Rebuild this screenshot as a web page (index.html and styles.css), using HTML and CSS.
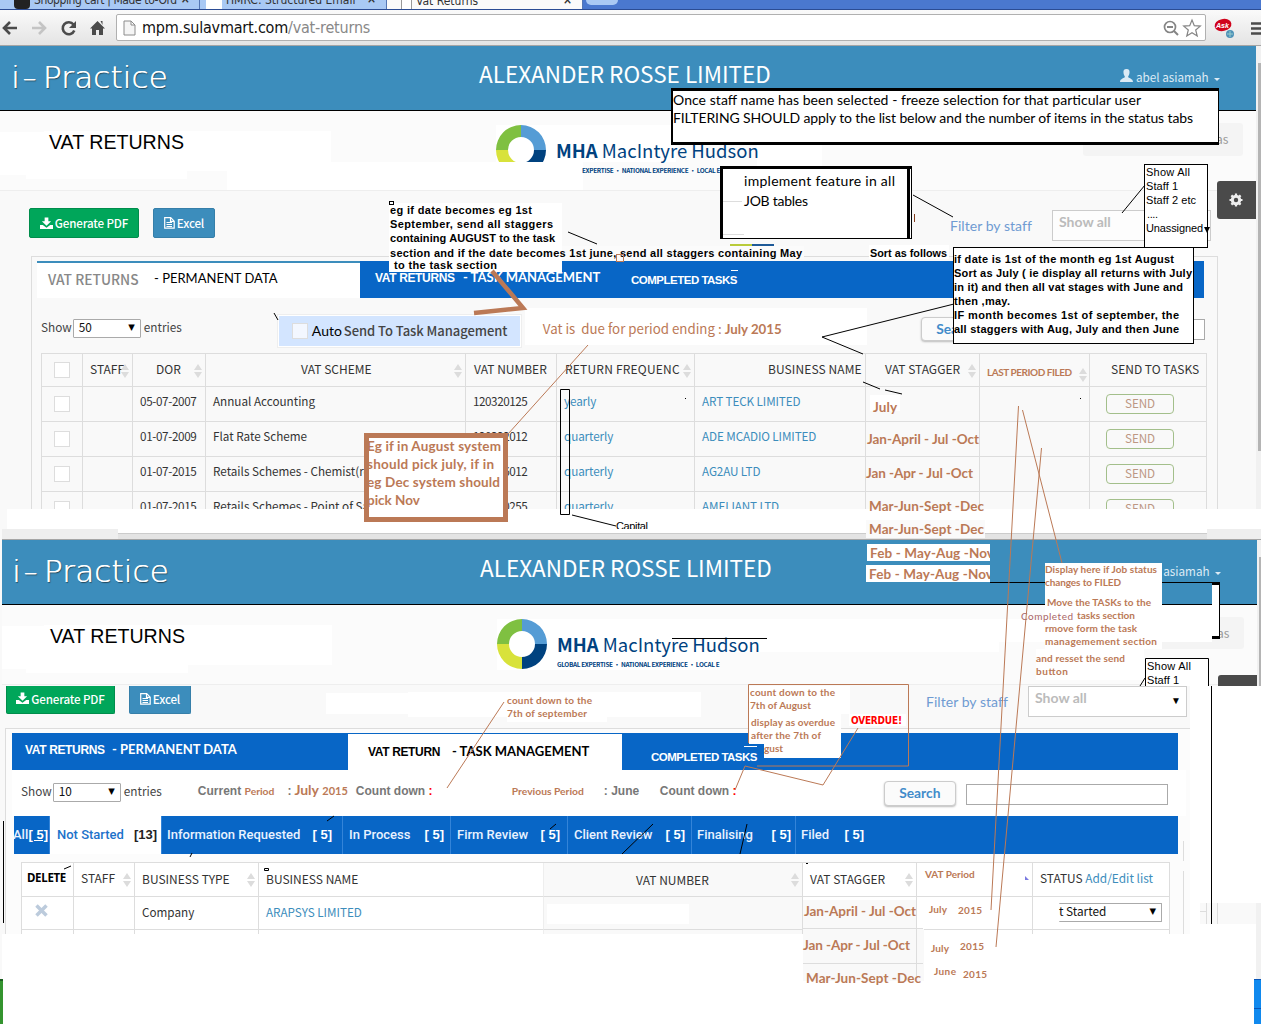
FILE: index.html
```html
<!DOCTYPE html>
<html lang="en">
<head>
<meta charset="utf-8">
<title>Vat Returns</title>
<link rel="stylesheet" href="styles.css">
</head>
<body>
<svg class="defs" width="0" height="0" aria-hidden="true">
  <symbol id="sort" viewBox="0 0 8 14"><path d="M4 0l4 6H0zM4 14l4-6H0z" fill="#dcdcdc"/></symbol>
  <symbol id="download" viewBox="0 0 14 13"><path d="M5 0h4v4h3L7 9 2 4h3zM0 8h3l4 3 4-3h3v4.500H0z" fill="#fff"/></symbol>
  <symbol id="file" viewBox="0 0 11 12"><path d="M.7.7h6l3.500 3.500v7H.7zM6.500.7v3.700h3.700M2.500 5.500h5.500M2.500 7.500h5.500M2.500 9.500h5.500" fill="none" stroke="#fff" stroke-width="1.200"/></symbol>
  <symbol id="user" viewBox="0 0 13 13"><path d="M6.500 0C9 0 9.800 1.600 9.500 4 9.300 6 8.400 7 8.100 7.700c0 1.500 4.900 1.600 4.900 5.300H0c0-3.700 4.900-3.800 4.900-5.300C4.600 7 3.700 6 3.500 4 3.200 1.600 4 0 6.500 0z" fill="#dcebf5"/></symbol>
  <symbol id="ring" viewBox="0 0 50 50"><path d="M25 0A25 25 0 0 0 0 25h12a13 13 0 0 1 13-13z" fill="#7fc041"/><path d="M25 0a25 25 0 0 1 25 25H38a13 13 0 0 0-13-13z" fill="#559cd5"/><path d="M50 25a25 25 0 0 1-25 25V38a13 13 0 0 0 13-13z" fill="#00427f"/><path d="M25 50A25 25 0 0 1 0 25h12a13 13 0 0 0 13 13z" fill="#d8e23b"/></symbol>
</svg>

<div class="canvas">
  <header class="chrome">
    <div class="tabstrip">
      <div class="btab t1"><i class="fav dark"></i><span>Shopping cart | Made to-Ord</span><b>×</b></div>
      <div class="btab t2"><i class="fav"></i><span>HMRC: Structured Email</span><b>×</b></div>
      <div class="btab t3"><i class="fav page"></i><span>Vat Returns</span><b>×</b></div>
      <div class="newtab"></div>
    </div>
    <div class="toolbar">
      <svg width="112" height="20" viewBox="0 0 112 20" fill="none">
        <path d="M17 10H4M10 4L4 10l6 6" stroke="#4b4b4b" stroke-width="2.600"/>
        <path d="M32 10h13M39 4l6 6-6 6" stroke="#c4c4c4" stroke-width="2.600"/>
        <path d="M73.500 6.500a6 6 0 1 0 .8 6" stroke="#4b4b4b" stroke-width="2.600"/><path d="M76 3v7h-7z" fill="#4b4b4b"/>
        <path d="M97.500 3l7.500 7.500h-2V17h-4v-5h-3v5h-4v-6.500h-2zM100.500 3h2v4z" fill="#4b4b4b"/>
      </svg>
      <div class="omnibox">
        <svg width="13" height="16" viewBox="0 0 13 16"><path d="M1 1h7l4 4v10H1zM8 1v4h4" fill="#f5f5f5" stroke="#8c8c8c"/></svg>
        <span class="url">mpm.sulavmart.com<em>/vat-returns</em></span>
        <svg class="end" width="40" height="20" viewBox="0 0 40 20" fill="none" stroke="#858585"><circle cx="8" cy="9" r="5.500" stroke-width="1.700"/><path d="M5 9h6M12 13l4 4" stroke-width="2"/><path d="M30 2l2.300 5.700 6 .4-4.600 3.900 1.500 6-5.200-3.300-5.200 3.300 1.500-6-4.600-3.900 6-.4z" stroke-width="1.200"/></svg>
      </div>
      <svg class="ext" width="50" height="22" viewBox="0 0 50 22"><ellipse cx="12" cy="8" rx="8.500" ry="6" fill="#d0021b" transform="rotate(-12 12 8)"/><text x="5" y="11" class="ask" textLength="13" lengthAdjust="spacingAndGlyphs">Ask</text><circle cx="19" cy="17" r="4" fill="#4f93b8"/><path d="M16 17h6M19 14v6" stroke="#9cc" /><path d="M40 6.500h10M40 11.500h10M40 16.500h10" stroke="#4b4b4b" stroke-width="2.600"/></svg>
    </div>
  </header>

  <main class="screen one">
    <div class="topbar">
      <div class="logo"><span>i</span><span class="dash">-</span><span>Practice</span></div>
      <h1>ALEXANDER ROSSE LIMITED</h1>
      <div class="account"><svg width="13" height="13"><use href="#user"/></svg><span>abel asiamah</span><i class="caret"></i></div>
    </div>
    <div class="hero">
      <svg class="patches" width="1256" height="79" viewBox="0 111 1256 79"><path d="M0 132H44V131H331V162H583V190H227V171H187V179H26V175H0zM496 125H676V162H496zM757 145h65v25h-65z" fill="#fff"/><rect x="1083" y="123" width="160" height="33" rx="3" fill="#f4f4f4"/></svg>
      <h2>VAT RETURNS</h2>
      <div class="brand">
        <svg class="ring" width="50" height="37" viewBox="0 0 50 37"><svg width="50" height="50"><use href="#ring"/></svg></svg>
        <div><strong><b>MHA</b> MacIntyre Hudson</strong><small class="cut">EXPERTISE • NATIONAL EXPERIENCE • LOCAL E</small></div>
      </div>
      <span class="crumb">as</span>
    </div>
    <div class="work">
      <div class="actions">
        <a class="btn green"><svg width="13" height="13"><use href="#download"/></svg>Generate PDF</a>
        <a class="btn blue"><svg width="11" height="12"><use href="#file"/></svg>Excel</a>
        <span class="filter">Filter by staff</span>
        <div class="staffsel">Show all</div>
        <div class="gear"><svg width="14" height="14" viewBox="-7 -7 14 14"><circle r="3.700" fill="none" stroke="#eee" stroke-width="3"/><path d="M0-6.500v13M-6.500 0h13M-4.600-4.600l9.200 9.200M4.600-4.600l-9.200 9.200" stroke="#eee" stroke-width="2.200"/><circle r="2.200" fill="#4a4a4a"/></svg></div>
      </div>
      <section class="panel">
        <nav class="tabs">
          <a class="tab active"><span class="g">VAT RETURNS</span><span class="p">- PERMANENT DATA</span></a>
          <a class="tab"><span class="v">VAT RETURNS</span><span class="m">- TASK MANAGEMENT</span></a>
          <a class="tab last"><span>COMPLETED TASKS</span></a>
        </nav>
        <div class="controls">
          <span>Show</span><div class="select">50<i>▼</i></div><span>entries</span>
          <div class="auto"><i></i><span>Auto</span><b>Send To Task Management</b></div>
          <div class="due"><span>Vat is&nbsp; due for period ending :</span> <b>July 2015</b></div>
          <a class="search">Search</a><div class="field"></div>
        </div>
        <table class="returns">
          <colgroup><col><col><col><col><col><col><col><col><col><col></colgroup>
          <thead><tr><th><i class="box"></i></th><th>STAFF<svg><use href="#sort"/></svg></th><th>DOR<svg><use href="#sort"/></svg></th><th>VAT SCHEME<svg><use href="#sort"/></svg></th><th>VAT NUMBER</th><th>RETURN FREQUENC<svg><use href="#sort"/></svg></th><th>BUSINESS NAME</th><th>VAT STAGGER<svg><use href="#sort"/></svg></th><th class="filed">LAST PERIOD FILED<svg><use href="#sort"/></svg></th><th>SEND TO TASKS</th></tr></thead>
          <tbody>
          <tr><td><i class="box"></i></td><td></td><td>05-07-2007</td><td>Annual Accounting</td><td>120320125</td><td><a>yearly</a></td><td><a>ART TECK LIMITED</a></td><td></td><td></td><td><span class="send">SEND</span></td></tr>
          <tr><td><i class="box"></i></td><td></td><td>01-07-2009</td><td>Flat Rate Scheme</td><td>120322012</td><td><a>quarterly</a></td><td><a>ADE MCADIO LIMITED</a></td><td></td><td></td><td><span class="send">SEND</span></td></tr>
          <tr><td><i class="box"></i></td><td></td><td>01-07-2015</td><td>Retails Schemes - Chemist(re</td><td>120326012</td><td><a>quarterly</a></td><td><a>AG2AU LTD</a></td><td></td><td></td><td><span class="send">SEND</span></td></tr>
          <tr><td><i class="box"></i></td><td></td><td>01-07-2015</td><td>Retails Schemes - Point of Sa</td><td>120320255</td><td><a>quarterly</a></td><td><a>AMELIANT LTD</a></td><td></td><td></td><td><span class="send">SEND</span></td></tr>
          </tbody>
        </table>
      </section>
    </div>
  </main>

  <div class="seam"><div class="seambar"></div></div>

  <main class="screen two">
    <div class="topbar">
      <div class="logo"><span>i</span><span class="dash">-</span><span>Practice</span></div>
      <h1>ALEXANDER ROSSE LIMITED</h1>
      <div class="account"><svg width="13" height="13"><use href="#user"/></svg><span>abel asiamah</span><i class="caret"></i></div>
    </div>
    <div class="hero">
      <svg class="patches" width="1254" height="79" viewBox="2 605 1254 79"><path d="M0 626H44V625H332V665H188V673H26V669H0zM497 619H1212V642H999V652H720V670H497z" fill="#fff"/><rect x="1083" y="617" width="161" height="32" rx="3" fill="#f4f4f4"/></svg>
      <h2>VAT RETURNS</h2>
      <div class="brand">
        <svg class="ring" width="50" height="51"><use href="#ring" width="50" height="50"/></svg>
        <div><strong><b>MHA</b> MacIntyre Hudson</strong><small>GLOBAL EXPERTISE • NATIONAL EXPERIENCE • LOCAL E</small></div>
      </div>
      <span class="crumb">as</span>
    </div>
    <div class="work">
      <div class="actions">
        <a class="btn green"><svg width="13" height="13"><use href="#download"/></svg>Generate PDF</a>
        <a class="btn blue"><svg width="11" height="12"><use href="#file"/></svg>Excel</a>
        <span class="filter">Filter by staff</span>
        <div class="staffsel">Show all<i>▼</i></div>
      </div>
      <section class="panel">
        <nav class="tabs">
          <a class="tab first"><span class="v">VAT RETURNS</span><span class="m">- PERMANENT DATA</span></a>
          <a class="tab active"><span class="v">VAT RETURN</span><span class="m">- TASK MANAGEMENT</span></a>
          <a class="tab last"><span>COMPLETED TASKS</span></a>
        </nav>
        <div class="controls">
          <span>Show</span><div class="select">10<i>▼</i></div><span>entries</span>
          <div class="period cur"><span>Current</span> <em>Period</em><span class="colon">:</span><strong>July</strong> <em class="yr">2015</em></div>
          <div class="count c1">Count down <b>:</b></div>
          <div class="period prev"><em>Previous Period</em><span class="colon">: June</span></div>
          <div class="count c2">Count down <b>:</b></div>
          <a class="search">Search</a><div class="field"></div>
        </div>
        <nav class="status">
          <a><span>All</span><u>[ 5]</u></a><a class="on"><span>Not Started</span><b>[13]</b></a><a><span>Information Requested</span><b>[ 5]</b></a><a><span>In Process</span><b>[ 5]</b></a><a><span>Firm Review</span><b>[ 5]</b></a><a><span>Client Review</span><b>[ 5]</b></a><a><span>Finalising</span><b>[ 5]</b></a><a><span>Filed</span><b>[ 5]</b></a>
        </nav>
        <table class="tasks">
          <colgroup><col><col><col><col><col><col><col><col></colgroup>
          <thead><tr><th class="del">DELETE</th><th>STAFF<svg><use href="#sort"/></svg></th><th>BUSINESS TYPE<svg><use href="#sort"/></svg></th><th>BUSINESS NAME</th><th>VAT NUMBER<svg><use href="#sort"/></svg></th><th>VAT STAGGER<svg><use href="#sort"/></svg></th><th class="vp">VAT Period</th><th>STATUS <a>Add/Edit list</a></th></tr></thead>
          <tbody>
          <tr><td><svg class="x" width="13" height="13" viewBox="0 0 13 13"><path d="M1.500 1.500l10 10M11.500 1.500l-10 10" stroke="#bccbdc" stroke-width="3.500"/></svg></td><td></td><td>Company</td><td><a>ARAPSYS LIMITED</a></td><td><div class="blank"></div></td><td></td><td></td><td><div class="select">t Started<i>▼</i></div></td></tr>
          <tr><td></td><td></td><td></td><td></td><td></td><td></td><td></td><td></td></tr>
          </tbody>
        </table>
      </section>
    </div>
  </main>

  <svg class="markup" width="1261" height="1027" viewBox="0 0 1261 1027">
    <!-- window edges and scrollbars -->
    <path d="M1256 46h5v463h-5zM1257 540h4v146h-4z" fill="#f1f1f1"/><path d="M1258 63h3v388h-3zM1259 557h2v129h-2z" fill="#b4b4b4"/>
    <path d="M1190 686h71v293h-71zM3 934h1251v93H3z" fill="#fff"/>
    <path d="M0 509h7v20H2v450H0z" fill="#f9f9f9"/>
    <path d="M1200 903h56v21h-56z" fill="#f9f9f9"/><path d="M1256 903h5v76h-5z" fill="#f1f1f1"/>
    <path d="M1206.500 903v21M1217.500 903v21M1200 911.500h6M1183.500 841v20M1183.500 871v63" stroke="#ddd"/>
    <path d="M0 979h3v45H0z" fill="#34942f"/><path d="M0 979h3v2H0z" fill="#1b5e20"/><path d="M1254 979h7v45h-7z" fill="#1089ee"/><path d="M1254 1008.500h7M1254 979.500h7" stroke="#0754b8"/>
    <path d="M3.500 821v102M1211.500 686v238" stroke="#000"/>

    <!-- filtering note -->
    <rect x="671" y="88" width="548" height="57"/><rect x="673" y="91" width="545" height="51" fill="#fff"/>
    <g class="cal"><text x="673" y="105" textLength="468">Once staff name has been selected - freeze selection for that particular user</text>
    <text x="673" y="123" textLength="520">FILTERING SHOULD apply to the list below and the number of items in the status tabs</text></g>

    <!-- feature note -->
    <path d="M730 244h44v2h-44z" fill="#b9cb3a"/><path d="M752 244h22v2h-22z" fill="#1e5a98"/>
    <rect x="720" y="166" width="192" height="73"/><rect x="723" y="169" width="184" height="69" fill="#fff"/><path d="M910.500 169v69" stroke="#fff"/>
    <path d="M723 201.500h19M723 234.500h21" stroke="#ddd"/>
    <g class="cal"><text x="744" y="186" textLength="151">implement feature in all</text><text x="744" y="206" textLength="64">JOB tables</text></g>
    <path d="M914.500 214v8" stroke="#823e1e"/>

    <!-- staff options -->
    <rect x="1144.500" y="164.500" width="63" height="83" fill="#fff" stroke="#000"/>
    <g class="ar"><text x="1146" y="176" textLength="44">Show All</text><text x="1146" y="190" textLength="32">Staff 1</text><text x="1146" y="204" textLength="50">Staff 2 etc</text><text x="1147" y="218" textLength="11">....</text><text x="1146" y="232" textLength="57">Unassigned</text></g>
    <path d="M1204 227h6l-3 6z"/>

    <!-- stagger note -->
    <path d="M389 203h173v69H389z" fill="#fff"/><path d="M562 246h242v13H562z" fill="#fbfbfb"/>
    <rect x="389.500" y="201.500" width="4" height="3" fill="#fff" stroke="#000"/>
    <g class="ab"><text x="390" y="214" textLength="142">eg if date becomes eg 1st</text><text x="390" y="228" textLength="163">September, send all staggers</text><text x="390" y="242" textLength="165">containing AUGUST to the task</text><text x="390" y="257" textLength="412">section and if the date becomes 1st june, send all staggers containing May</text><text x="394" y="269" textLength="103">to the task section</text></g>
    <rect x="616.500" y="254.500" width="7" height="7" fill="none" stroke="#bb7956"/>
    <path d="M731 270.500h7" stroke="#fff"/>

    <!-- sort note -->
    <path d="M869 245h80v14h-80z" fill="#fff"/><text class="ab" x="870" y="257" textLength="77" lengthAdjust="spacingAndGlyphs">Sort as follows</text>
    <rect x="953.500" y="247.500" width="240" height="96" fill="#fff" stroke="#000"/>
    <g class="ab"><text x="954" y="263" textLength="220">if date is 1st of the month eg 1st August</text><text x="954" y="277" textLength="238">Sort as July ( ie display all returns with July</text><text x="954" y="291" textLength="229">in it) and then all vat stages with June and</text><text x="954" y="305" textLength="56">then ,may.</text><text x="954" y="319" textLength="225">IF month becomes 1st of september, the</text><text x="954" y="333" textLength="225">all staggers with Aug, July and then June</text></g>

    <!-- previous month note -->
    <rect x="366.500" y="435.500" width="139" height="84" fill="#fff" stroke="#bb7956" stroke-width="5"/>
    <g class="cb"><text x="367" y="451" textLength="134">Eg if in August system</text><text x="367" y="469" textLength="127">should pick july, if in</text><text x="367" y="487" textLength="133">eg Dec system should</text><text x="367" y="505" textLength="53">pick Nov</text></g>

    <!-- stagger values, upper table -->
    <path d="M870 395h30v16h-30zM867 544h123v17H867zM866 565h124v17H866z" fill="#fff"/><path d="M866 520h119v18H866z" fill="#fafafa"/>
    <g class="cb"><text x="873" y="412" textLength="24">July</text><text x="867" y="444" textLength="112">Jan-April - Jul -Oct</text><text x="866" y="478" textLength="107">Jan -Apr - Jul -Oct</text><text x="869" y="511" textLength="115">Mar-Jun-Sept -Dec</text><text x="869" y="534" textLength="115">Mar-Jun-Sept -Dec</text>
    <svg x="866" y="544" width="124" height="38"><text x="4" y="14" textLength="124">Feb - May-Aug -Nov</text><text x="3" y="35" textLength="124">Feb - May-Aug -Nov</text></svg></g>

    <!-- filed note -->
    <path d="M1045 563h117v86h-117zM1036 649h108v31h-108zM1162 604h50v38h-50z" fill="#fff"/>
    <path d="M1162 583h50v21h-50z" fill="#3c8dbc"/><path d="M1162 604.500h50M990 582.500h55M1162 582.500h50" stroke="#000"/><path d="M1212 582h8v57h-8z"/><path d="M1212 585h7v51h-7z" fill="#fff"/>
    <g class="cs"><text x="1045" y="573" textLength="112">Display here if Job status</text><text x="1045" y="586" textLength="76">changes to FILED</text><text x="1047" y="606" textLength="104">Move the TASKs to the</text><text class="thin" x="1021" y="620" textLength="52">Completed</text><text x="1077" y="619" textLength="58">tasks section</text><text x="1045" y="632" textLength="92">rmove form the task</text><text x="1045" y="645" textLength="112">managemement section</text><text x="1036" y="662" textLength="89">and resset the send</text><text x="1036" y="675" textLength="32">button</text></g>
    <path d="M1145.500 686v-27.500h63V686" fill="#fff" stroke="#000"/><g class="ar"><text x="1147" y="670" textLength="44">Show All</text><text x="1147" y="684" textLength="32">Staff 1</text></g><path d="M1218 686v-8q0-3 3-3h36v11z" fill="#4a4a4a"/>

    <!-- countdown notes -->
    <path d="M408 692h293v25H408zM507 700h100v22H507zM326 693h82v21h-82z" fill="#fff"/>
    <g class="cs"><text x="507" y="704" textLength="85">count down to the</text><text x="507" y="717" textLength="80">7th of september</text></g>
    <path d="M749 686h101v28h-9v44h-77v-14h-15z" fill="#fff"/><path d="M748.500 743V684.500h160v81.500H757" fill="none" stroke="#bb7956"/>
    <g class="cs"><text x="750" y="696" textLength="85">count down to the</text><text x="750" y="709" textLength="61">7th of August</text><text x="751" y="726" textLength="84">display as overdue</text><text x="751" y="739" textLength="70">after the 7th of</text><text x="764" y="752" textLength="19">gust</text></g>
    <path d="M849 714h57v12h-57z" fill="#fff"/><text class="over" x="851" y="724" textLength="51">OVERDUE!</text>
    <path d="M744 746.500h13" stroke="#fff"/>

    <!-- stagger and period values, lower table -->
    <path d="M803 900h114v28H803zM803 929h121v52H803z" fill="#f9f9f9"/><path d="M803 928.500h120M803 963.500h120M916.500 896v80M802.500 896v36" stroke="#ddd"/>
    <path d="M924 897h108v31H924z" fill="#fff"/>
    <g class="cb"><text x="804" y="916" textLength="112">Jan-April - Jul -Oct</text><text x="803" y="950" textLength="107">Jan -Apr - Jul -Oct</text><text x="806" y="983" textLength="115">Mar-Jun-Sept -Dec</text></g>
    <g class="cs"><text x="929" y="913" textLength="18">July</text><text x="958" y="914" textLength="24">2015</text><text x="931" y="952" textLength="18">July</text><text x="960" y="950" textLength="24">2015</text><text x="934" y="975" textLength="22">June</text><text x="963" y="978" textLength="24">2015</text></g>

    <!-- pointers -->
    <g class="ln" stroke="#000"><path d="M568 232l29 12M913 195l40 22M1145 185l-23 28M954 304l-132 33 41 17M863 382l17 7M885 390l17 4M672 638.500h95M653 824l-31 30M747 824l-7 30M274 313l4 7M190 857l2-4M64 869l7-3M327 821l7-5M550 829l6-5M1140 686l5-8"/><path d="M560.500 389.500h9v125h-9zM572 515l44 11"/><path d="M264.500 868.500h4v2h-4z"/><path d="M685 398.500h1M1080 398.500h1M806 863.500h2"/></g>
    <g class="ln" stroke="#bb7956"><path d="M588 345l-80 89M1018.500 406L991 910M1022.500 410L1062 563M1041.500 448L996 947M504 702l-57 86M858 728l-35 57-78-19-10 24"/></g>
    <path d="M492 271l31 37-49 5" fill="none" stroke="#bb7956" stroke-width="4.500"/>
    <svg x="616" y="519" width="40" height="10"><text class="ar" x="0" y="11" textLength="32">Capital</text></svg>
    <path d="M1025 876v4h4z" fill="#7a7ae0"/>
  </svg>
</div>
</body>
</html>
```
FILE: styles.css
```css
* { box-sizing: border-box; }
body { margin: 0; background: #fff; font: 12px/16px "Noto Sans CJK SC", "Noto Sans", sans-serif; color: #333; }
.defs { position: absolute; }
.canvas { position: relative; width: 1261px; height: 1027px; overflow: hidden; }
h1, h2 { margin: 0; font-weight: 400; }
a { color: #3c8dbc; }
i, em { font-style: normal; }

/* browser chrome */
.chrome { height: 46px; background: linear-gradient(#fafafa 10px, #e4e4e4); border-bottom: 1px solid #a5a5a5; }
.tabstrip { display: flex; height: 10px; overflow: hidden; background: #4a78cf; border-bottom: 1px solid #2b4c94; }
.btab { display: flex; align-items: center; gap: 4px; height: 10px; padding-left: 14px; background: #a9c9f4; font: 12px/10px "DejaVu Sans Condensed", sans-serif; color: #333; border-right: 1px solid #5476b4; }
.btab span { position: relative; top: -5px; white-space: nowrap; overflow: visible; }
.btab b { margin-left: auto; padding-right: 10px; position: relative; top: -6px; }
.t1 { width: 200px; } .t1 span { letter-spacing: -.4px; } .t1 b { padding-right: 12px; }
.t2 { width: 187px; padding-left: 6px; } .t3 { width: 196px; height: 11px; background: #fafafa; }
.fav { flex: none; width: 16px; height: 16px; background: #fff; position: relative; top: -4px; }
.fav.dark { background: #222; border-radius: 4px; }
.fav.page { width: 11px; border: 1px solid #999; }
.newtab { width: 32px; height: 5px; margin-left: 3px; background: #a9c9f4; border-radius: 0 0 5px 5px; }
.toolbar { display: flex; align-items: center; height: 35px; }
.omnibox { display: flex; align-items: center; width: 1090px; height: 27px; margin-left: 4px; padding-left: 6px; background: #fff; border: 1px solid #b0b0b0; border-radius: 2px; }
.url { margin-left: 6px; font: 16px/20px "DejaVu Sans Condensed", sans-serif; color: #111; letter-spacing: -.2px; white-space: nowrap; }
.url em { color: #888; }
.omnibox .end { margin: 0 3px 0 auto; }
.ext { margin-left: 5px; }
.ask { font: italic bold 8px "Liberation Sans", sans-serif; fill: #fff; }

/* application header */
.topbar { display: flex; height: 65px; background: #3c8dbc; border-bottom: 1px solid #000; color: #fff; }
.one .topbar, .one .hero { width: 1256px; }
.two .topbar, .two .hero { width: 1255px; }
.logo { display: flex; width: 479px; padding: 15px 0 0 11px; font: 200 31px/32px "DejaVu Sans Light", "DejaVu Sans", sans-serif; text-shadow: .5px 0 0 #fff, 1px 1px 1px #245; letter-spacing: .15px; }
.two .logo { padding-left: 10px; }
.logo .dash { width: 21px; margin-left: 2px; transform: scaleX(1.3); transform-origin: left; }
.topbar h1 { width: 641px; font-size: 22.500px; line-height: 32px; padding-top: 11px; white-space: nowrap; }
.account { display: flex; gap: 3px; padding-top: 23px; font-size: 11.700px; color: #dcebf5; white-space: nowrap; }
.caret { margin: 9px 0 0 2px; width: 0; height: 0; border: 3px solid transparent; border-top-color: #dcebf5; }
.hero { position: relative; display: flex; height: 80px; background: #fbfbfb; border-bottom: 1px solid #eee; }
.patches { position: absolute; left: 0; top: 0; }
.hero h2 { position: relative; width: 447px; margin-left: 49px; padding-top: 20px; font: 19.600px/22px "Liberation Sans", sans-serif; color: #000; }
.two .hero h2 { margin-left: 48px; }
.brand { position: relative; display: flex; padding-top: 14px; gap: 10px; color: #00427f; }
.brand .ring { flex: none; }
.brand div { padding-top: 13px; width: 601px; }
.brand strong { display: block; font-size: 18.500px; font-weight: 400; line-height: 24px; white-space: nowrap; }
.brand small { display: block; margin-top: 3px; font: bold 6.400px/12px "Noto Sans CJK SC", sans-serif; white-space: nowrap; letter-spacing: -.33px; }
.brand small.cut { padding-left: 26px; }
.crumb { position: relative; margin-left: 59px; padding-top: 20px; color: #999; }

/* work area */
.work { background: #f9f9f9; clip-path: inset(-20px 0 0 0); }
.one .work { height: 318px; }
.actions { display: flex; }
.btn { display: flex; align-items: center; justify-content: center; gap: 2px; height: 30px; color: #fff; border-radius: 2px; font-size: 11.600px; font-weight: 500; white-space: nowrap; letter-spacing: -.15px; }
.btn.green { width: 110px; background: #00a65a; border: 1px solid #008d4c; margin-right: 14px; }
.btn.blue { width: 62px; background: #3c8dbc; border: 1px solid #367fa9; }
.filter { width: 83px; font: 14px/18px Lato, sans-serif; color: #6f9bd2; white-space: nowrap; letter-spacing: .05px; }
.staffsel { width: 159px; height: 31px; padding: 2px 6px; border: 1px solid #ccc; font: bold 14px/18px Lato, sans-serif; color: #bbb; background: #fdfdfd; display: flex; }
.staffsel i { margin: 2px -1px 0 auto; font-size: 10px; color: #000; }
.one .actions { height: 65px; padding: 17px 0 0 29px; }
.one .filter { margin: 9px 0 0 735px; }
.one .staffsel { margin: 2px 0 0 19px; }
.gear { width: 39px; height: 38px; margin: -27px 0 0 6px; padding: 12px; background: #4a4a4a; border-radius: 3px 0 0 3px; }
.panel { border: 1px solid #ddd; }
.one .panel { width: 1187px; height: 260px; margin-left: 31px; padding: 4px 5px; }
.tabs { display: flex; height: 37px; background: #0866c6; color: #fff; font: bold 13px/16px Lato, sans-serif; white-space: nowrap; }
.tab { display: flex; color: #fff; }
.one .tabs { width: 1167px; }
.one .tab.active { width: 323px; background: #fff; border-top: 2px solid #3c8dbc; padding: 7px 0 0 11px; }
.g { width: 106px; color: #888; font: 500 13.800px/18px "Noto Sans CJK SC", sans-serif; }
.one .p { color: #000; font-weight: 400; }
.one .tab:nth-child(2) { width: 271px; padding: 8px 0 0 15px; }
.v { width: 88px; font: bold 12px/16px "Liberation Sans", sans-serif; letter-spacing: -.35px; }
.one .v { padding-top: 1px; }
.one .last { padding-top: 11px; font: bold 11.500px/16px "Liberation Sans", sans-serif; letter-spacing: -.5px; }
.controls { display: flex; color: #444; white-space: nowrap; }
.controls > span { font-size: 11.800px; }
.one .controls { height: 55px; padding: 21px 0 0 4px; }
.select { display: flex; width: 68px; height: 19px; margin: 0 3px 0 2px; padding: 0 5px; border: 1px solid #aaa; background: #fff; color: #111; font-size: 11.800px; line-height: 14px; border-radius: 1px; }
.select i { margin-left: auto; font: 8.500px/14px "DejaVu Sans", sans-serif; color: #000; }
.controls .select { margin-left: 1px; }
.auto { display: flex; align-items: center; width: 243px; height: 32px; margin: -4px 0 0 96px; padding-left: 13px; background: #d3e5ff; border: 1px solid #fff; box-shadow: 0 0 0 1px #eee; }
.auto i { width: 16px; height: 16px; background: #f3f7ff; border: 1px solid #ddd; margin-right: 4px; }
.auto span { font: 14px/18px Lato, sans-serif; color: #000; width: 32px; }
.auto b { font-weight: 500; font-size: 13px; letter-spacing: -.05px; }
.due { width: 342px; height: 37px; margin: -11px 62px 0 4px; padding: 12px 0 0 18px; background: #fff; font: 13.300px/18px "Noto Sans CJK SC", sans-serif; color: #bb7956; }
.due b { font-family: Lato, sans-serif; }
.search { flex: none; width: 72px; height: 25px; background: #fbfbfb; border: 1px solid #ccc; border-radius: 4px; box-shadow: 0 1px 2px #bbb; text-align: center; font: bold 13.800px/22px Lato, sans-serif; color: #428bca; }
.one .search { height: 24px; margin: -2px 0 0 -8px; }
.field { flex: none; width: 202px; height: 21px; background: #fff; border: 1px solid #aaa; margin-left: 10px; }

table { table-layout: fixed; border-collapse: separate; border-spacing: 0; border: solid #ddd; border-width: 1px 0 0 1px; }
th, td { position: relative; padding: 0 0 0 8px; border: solid #ddd; border-width: 0 1px 1px 0; font-weight: 400; text-align: left; white-space: nowrap; }
th { height: 33px; }
th svg { position: absolute; right: 3px; top: 10px; width: 8px; height: 14px; }
.returns { width: 1166px; margin-left: 4px; }
.returns th { padding-bottom: 2px; }
.returns td { height: 35px; line-height: 28px; padding-bottom: 6px; font-size: 11.700px; }
.returns td:nth-child(n+5) { letter-spacing: -.1px; }
.returns col:nth-child(1) { width: 41px; } .returns col:nth-child(2) { width: 50px; } .returns col:nth-child(3) { width: 73px; }
.returns col:nth-child(4) { width: 260px; } .returns col:nth-child(5) { width: 91px; } .returns col:nth-child(6) { width: 138px; }
.returns col:nth-child(7) { width: 171px; } .returns col:nth-child(8) { width: 114px; } .returns col:nth-child(9) { width: 110px; }
.returns col:nth-child(10) { width: 117px; }
.returns th:first-child, .returns td:first-child { padding-left: 12px; padding-bottom: 0; }
.returns th:nth-child(2) { padding-left: 7px; }
.returns th:nth-child(3) { padding-left: 23px; } .returns td:nth-child(3) { padding-left: 7px; letter-spacing: -.35px; }
.returns th:nth-child(4) { padding-left: 95px; } .returns td:nth-child(4), .returns td:nth-child(5) { padding-left: 7px; }
.returns td:nth-child(5) { letter-spacing: -.8px; letter-spacing: -.45px; }
.returns th:nth-child(6) { letter-spacing: .2px; }
.returns td:nth-child(6), .returns td:nth-child(7) { padding-left: 7px; }
.returns th:nth-child(7) { padding-left: 73px; letter-spacing: .1px; } .returns th:nth-child(8) { padding-left: 19px; }
.returns th:nth-child(10) { padding-left: 21px; } .returns td:nth-child(10) { padding-left: 16px; padding-bottom: 0; }
.returns .filed { padding: 4px 0 0 7px; font: bold 10px/12px Lato, sans-serif; letter-spacing: -.45px; color: #bb7956; }
.returns .filed svg { right: 2px; top: 14px; }
.box { display: block; width: 16px; height: 16px; border: 1px solid #ddd; background: #fff; }
.send { display: block; width: 68px; height: 20px; border: 1px solid #a3bf8b; border-radius: 4px; color: #bd9783; text-align: center; line-height: 16px; }

/* strip between the two captures */
.seam { height: 31px; padding: 20px 0 0 2px; background: #fff; }
.seambar { height: 11px; background: linear-gradient(90deg, #eee 0 116px, transparent 116px 1205px, #eee 1205px), linear-gradient(#fff 0 4px, #ccc 4px 5px, #e4e4e4 5px); border-bottom: 1px solid #a5a5a5; }

/* second capture */
.two { padding-left: 2px; }
.two .topbar h1 { margin-left: -1px; width: 641px; }
.two .work { height: 249px; overflow: hidden; }
.two .actions { height: 43px; padding: 0 0 0 4px; }
.two .btn { height: 28px; border-top: 0; border-radius: 0 0 2px 2px; margin-top: 1px; padding-bottom: 2px; }
.two .btn.green { width: 109px; }
.two .filter { margin: 8px 0 0 735px; }
.two .staffsel { margin: 1px 0 0 19px; background: #fff; }
.two .panel { margin-left: 3px; padding: 4px 6px; width: 1187px; background: #fcfcfc; border-right: 0; }
.two .tabs { width: 1166px; border-top: 1px solid #0866c6; }
.two .first { width: 336px; padding: 7px 0 0 13px; }
.two .v { margin-top: 1px; }
.two .active { width: 274px; background: #fff; padding: 9px 0 0 20px; }
.two .active span { color: #000; }
.two .active .v { width: 84px; }
.two .first .v { width: 87px; }
.two .last { padding: 15px 0 0 29px; font: bold 11.500px/16px "Liberation Sans", sans-serif; letter-spacing: -.5px; }
.two .controls { height: 46px; padding: 13px 0 0 9px; background: #fff; }
.period, .count { font: bold 12px/16px "Liberation Sans", sans-serif; color: #777; }
.period em { font: bold 10.300px/16px Lato, sans-serif; color: #bb7956; }
.period strong { font: bold 14px/16px Lato, sans-serif; color: #bb7956; }
.period .yr { font-size: 11px; }
.cur { width: 158px; margin: -1px 0 0 36px; }
.cur .colon { margin: 0 3px 0 13px; }
.c1 { width: 156px; }
.count b { color: #f00; }
.prev { width: 148px; } .prev .colon { margin-left: 20px; }
.c2 { width: 224px; }
.two .search { margin-top: -2px; }
.two .field { margin-top: 1px; }
.status { display: flex; height: 38px; margin-left: 2px; width: 1164px; background: #0866c6; white-space: nowrap; overflow: hidden; font: bold 13px/38px Roboto, sans-serif; }
.status a { display: flex; justify-content: space-between; flex: none; padding: 0 7px 0 6px; color: #e8f2ff; border-right: 1px solid #3484d8; font-weight: 500; }
.status b, .status u { color: #fff; font: bold 13px/37px "Liberation Sans", sans-serif; }
.status a:nth-child(1) { width: 37px; padding: 0 1px 0 0; margin-left: -1px; } .status a:nth-child(2) { width: 112px; padding-left: 7px; padding-right: 4px; }
.status a:nth-child(3) { width: 181px; padding-left: 5px; padding-right: 10px; } .status a:nth-child(4) { width: 108px; padding-right: 6px; }
.status a:nth-child(5) { width: 117px; padding-right: 7px; } .status a:nth-child(6) { width: 124px; padding-right: 6px; } .status a:nth-child(7) { width: 104px; padding-left: 5px; padding-right: 4px; }
.status a:nth-child(8) { width: 72px; padding: 0 4px 0 5px; border: 0; }
.status .on { background: #fff; color: #1c72ca; }
.status .on b { color: #222; }
.tasks { width: 1149px; margin: 8px 0 0 9px; background: #fff; }
.tasks th { height: 34px; padding-bottom: 1px; } .tasks td { height: 33px; line-height: 28px; padding-bottom: 2px; font-size: 11.700px; }
.tasks col:nth-child(1) { width: 52px; } .tasks col:nth-child(2) { width: 61px; } .tasks col:nth-child(3) { width: 124px; }
.tasks col:nth-child(4) { width: 285px; } .tasks col:nth-child(5) { width: 259px; } .tasks col:nth-child(6) { width: 114px; }
.tasks col:nth-child(7) { width: 116px; } .tasks col:nth-child(8) { width: 137px; }
.tasks th:first-child { padding-left: 5px; } .tasks td:first-child { padding-left: 13px; }
.tasks .del { font: bold 11.500px/16px "Noto Sans", sans-serif; letter-spacing: -.3px; color: #000; padding-bottom: 4px; }
.tasks th:nth-child(2) { padding-left: 7px; padding-bottom: 4px; }
.tasks th:nth-child(3), .tasks td:nth-child(3) { padding-left: 7px; }
.tasks td:nth-child(4), .tasks th:nth-child(4) { padding-left: 7px; border-right-color: #eee; }
.tasks th:nth-child(5) { padding-left: 92px; padding-bottom: 0; } .tasks th:nth-child(6), .tasks th:nth-child(8) { padding-left: 7px; }
.tasks th:nth-child(8) { padding-bottom: 4px; font-size: 11.900px; }
.tasks th:nth-child(5), .tasks td:nth-child(5) { background: #f9f9f9; }
.tasks .vp { font: bold 10px/12px Lato, sans-serif; color: #bb7956; padding-bottom: 12px; }
.x { display: block; margin-top: -4px; }
.blank { width: 142px; height: 20px; margin: 3px 0 0 -5px; background: #fff; }
.tasks .select { width: 103px; margin-left: 18px; border-left: 0; padding-left: 0; }

/* annotations */
.markup { position: absolute; left: 0; top: 0; }
.markup .cal { font: 14px Lato, sans-serif; fill: #000; }
.markup .cb { font: bold 13.500px Lato, sans-serif; fill: #bb7956; }
.markup .cs { font: bold 10px Lato, sans-serif; fill: #bb7956; }
.markup .thin { font-weight: 400; fill: #a66; }
.markup .ar { font: 11px "Liberation Sans", sans-serif; fill: #000; }
.markup .ab { font: bold 11px "Liberation Sans", sans-serif; fill: #000; }
.markup .over { font: bold 10px "DejaVu Sans Condensed", sans-serif; fill: #f00; }
.ln path { fill: none; }
```
